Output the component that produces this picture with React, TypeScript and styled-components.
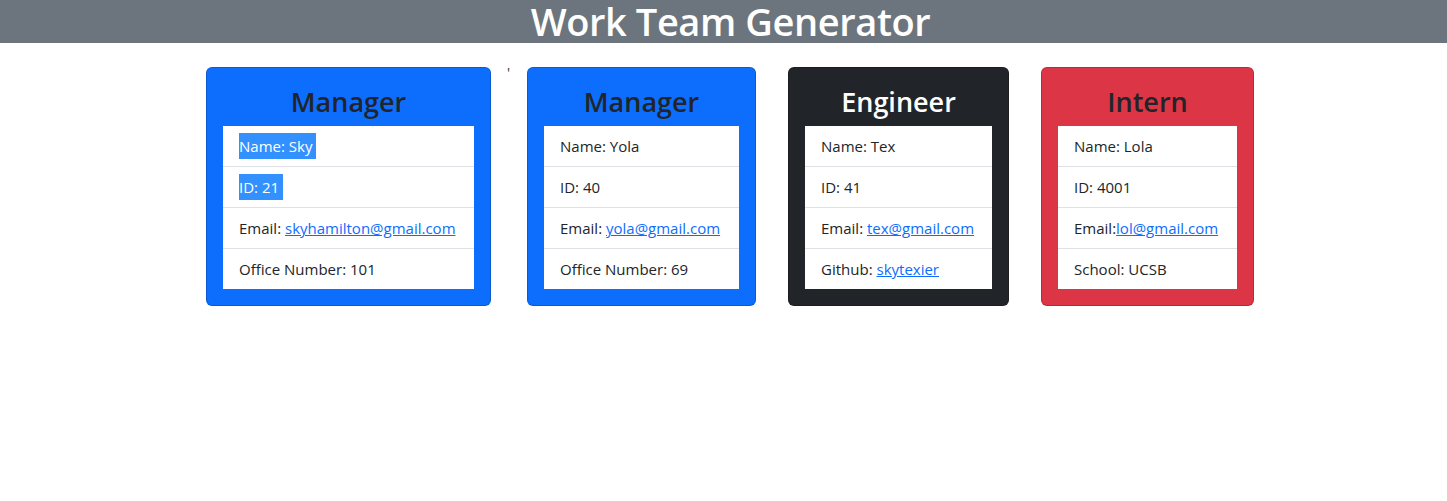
import * as React from "react";
import styled, { createGlobalStyle } from "styled-components";

const GlobalStyle = createGlobalStyle`
	body {
		margin: 0;
		background: #fff;
		font-family: "Open Sans", "Noto Sans", sans-serif;
		color: #212529;
	}
`;

const Header = styled.header`
	background-color: #6c757d;
	height: 43px;
	display: flex;
	justify-content: center;
	align-items: center;
	padding-left: 14px;
`;

const Title = styled.h1`
	margin: 0;
	font-size: 38px;
	font-weight: 600;
	line-height: 43px;
	color: #fff;
	letter-spacing: -0.4px;
`;

const Row = styled.main`
	display: flex;
	justify-content: center;
	align-items: flex-start;
	padding: 24px 0 0 13px;
`;

const Stray = styled.span`
	width: 4px;
	font-size: 14px;
	line-height: 12px;
	color: #333;
`;

type Variant = "primary" | "dark" | "danger";

const bg: Record<Variant, string> = {
	primary: "#0d6efd",
	dark: "#212529",
	danger: "#dc3545",
};

const Card = styled.section<{ $variant: Variant; $width: number }>`
	width: ${(p) => p.$width}px;
	box-sizing: border-box;
	margin: 0 16px;
	padding: 16px;
	border: 1px solid rgba(0, 0, 0, 0.175);
	border-radius: 6px;
	background-color: ${(p) => bg[p.$variant]};
`;

const Role = styled.h3<{ $light?: boolean }>`
	margin: 0 0 7px;
	padding-top: 1px;
	text-align: center;
	font-size: 27px;
	font-weight: 600;
	line-height: 34px;
	color: ${(p) => (p.$light ? "#fff" : "#212529")};
`;

const List = styled.ul`
	list-style: none;
	margin: 0;
	padding: 0;
	background: #fff;
`;

const Item = styled.li`
	padding: 8px 16px;
	font-size: 15px;
	line-height: 24px;
	border-bottom: 1px solid #dee2e6;
	white-space: nowrap;

	&:last-child {
		border-bottom: none;
	}
`;

const Selected = styled.span`
	background: #3390ff;
	color: #fff;
	padding: 3px 4px 3px 0;
`;

const Link = styled.a`
	color: #0d6efd;
	text-decoration: underline;
`;

interface Member {
	role: string;
	variant: Variant;
	width: number;
	name: string;
	id: string;
	email: string;
	emailGap?: boolean;
	extraLabel: string;
	extra: string;
	extraLink?: boolean;
	selected?: boolean;
}

const team: Member[] = [
	{
		role: "Manager",
		variant: "primary",
		width: 285,
		name: "Sky",
		id: "21",
		email: "skyhamilton@gmail.com",
		extraLabel: "Office Number",
		extra: "101",
		selected: true,
	},
	{
		role: "Manager",
		variant: "primary",
		width: 229,
		name: "Yola",
		id: "40",
		email: "yola@gmail.com",
		extraLabel: "Office Number",
		extra: "69",
	},
	{
		role: "Engineer",
		variant: "dark",
		width: 221,
		name: "Tex",
		id: "41",
		email: "tex@gmail.com",
		extraLabel: "Github",
		extra: "skytexier",
		extraLink: true,
	},
	{
		role: "Intern",
		variant: "danger",
		width: 213,
		name: "Lola",
		id: "4001",
		email: "lol@gmail.com",
		emailGap: false,
		extraLabel: "School",
		extra: "UCSB",
	},
];

function MemberCard({ m }: { m: Member }) {
	const nameText = `Name: ${m.name}`;
	const idText = `ID: ${m.id}`;
	return (
		<Card $variant={m.variant} $width={m.width}>
			<Role $light={m.variant === "dark"}>{m.role}</Role>
			<List>
				<Item>{m.selected ? <Selected>{nameText}</Selected> : nameText}</Item>
				<Item>{m.selected ? <Selected>{idText}</Selected> : idText}</Item>
				<Item>
					Email:{m.emailGap === false ? "" : " "}
					<Link href={`mailto:${m.email}`}>{m.email}</Link>
				</Item>
				<Item>
					{m.extraLabel}:{" "}
					{m.extraLink ? <Link href="#">{m.extra}</Link> : m.extra}
				</Item>
			</List>
		</Card>
	);
}

export default function App() {
	return (
		<>
			<GlobalStyle />
			<Header>
				<Title>Work Team Generator</Title>
			</Header>
			<Row>
				<MemberCard m={team[0]} />
				<Stray>'</Stray>
				<MemberCard m={team[1]} />
				<MemberCard m={team[2]} />
				<MemberCard m={team[3]} />
			</Row>
		</>
	);
}
